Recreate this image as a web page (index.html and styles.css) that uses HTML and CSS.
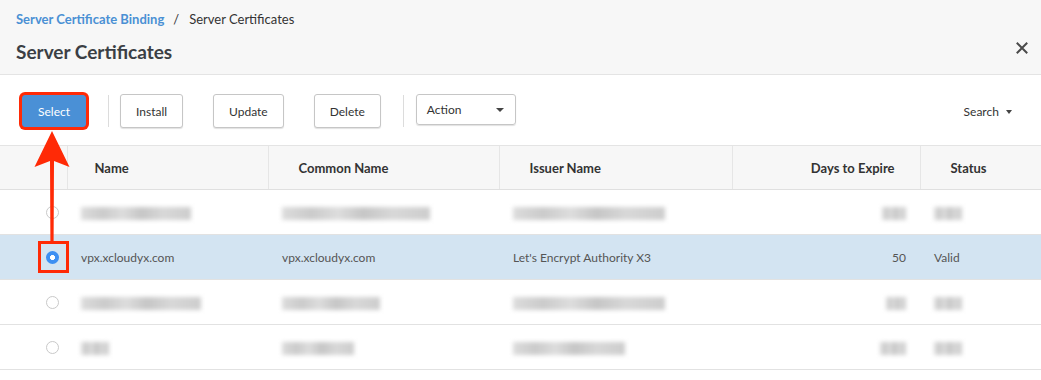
FILE: index.html
```html
<!doctype html>
<html lang="en">
  <head>
    <meta charset="UTF-8" />
    <title>Server Certificates</title>
    <link rel="stylesheet" href="styles.css">
  </head>
  <body>
    <div class="page">
      <div class="pageHead">
        <div class="breadcrumb">
          <a class="crumbLink" href="#">Server Certificate Binding</a>
          <span class="crumbSep">/</span>
          <span class="crumbCurrent">Server Certificates</span>
        </div>
        <div class="titleRow">
          <h1 class="title">Server Certificates</h1>
          <button class="closeBtn" aria-label="Close">
            <svg width="12" height="12" viewBox="0 0 12 12"><path d="M1.5 1.5 L10.5 10.5 M10.5 1.5 L1.5 10.5" stroke="#4a4a4a" stroke-width="2" stroke-linecap="square"/></svg>
          </button>
        </div>
      </div>

      <div class="toolbar">
        <button class="btn btnPrimary highlighted">Select</button>
        <span class="toolSep"></span>
        <button class="btn">Install</button>
        <button class="btn">Update</button>
        <button class="btn">Delete</button>
        <span class="toolSep"></span>
        <div class="selectBox">
          <span>Action</span>
          <span class="caret"></span>
        </div>
        <div class="search">Search <span class="caret small"></span></div>
      </div>

      <table class="certTable">
        <thead>
          <tr>
            <th class="colRadio"></th>
            <th class="colName">Name</th>
            <th class="colCommon">Common Name</th>
            <th class="colIssuer">Issuer Name</th>
            <th class="colDays num">Days to Expire</th>
            <th class="colStatus">Status</th>
          </tr>
        </thead>
        <tbody>
          <tr>
            <td class="radioCell"><span class="radio"></span></td>
            <td><span class="redacted" style="width:110px"></span></td>
            <td><span class="redacted" style="width:148px"></span></td>
            <td><span class="redacted" style="width:152px"></span></td>
            <td class="num"><span class="redacted" style="width:24px"></span></td>
            <td><span class="redacted" style="width:28px"></span></td>
          </tr>
          <tr class="selected">
            <td class="radioCell"><span class="radio checked"></span></td>
            <td>vpx.xcloudyx.com</td>
            <td>vpx.xcloudyx.com</td>
            <td>Let's Encrypt Authority X3</td>
            <td class="num">50</td>
            <td>Valid</td>
          </tr>
          <tr>
            <td class="radioCell"><span class="radio"></span></td>
            <td><span class="redacted" style="width:120px"></span></td>
            <td><span class="redacted" style="width:98px"></span></td>
            <td><span class="redacted" style="width:152px"></span></td>
            <td class="num"><span class="redacted" style="width:20px"></span></td>
            <td><span class="redacted" style="width:28px"></span></td>
          </tr>
          <tr>
            <td class="radioCell"><span class="radio"></span></td>
            <td><span class="redacted" style="width:28px"></span></td>
            <td><span class="redacted" style="width:72px"></span></td>
            <td><span class="redacted" style="width:112px"></span></td>
            <td class="num"><span class="redacted" style="width:26px"></span></td>
            <td><span class="redacted" style="width:28px"></span></td>
          </tr>
        </tbody>
      </table>

      <!-- annotation: arrow from Select to the selected radio -->
      <svg class="callout" width="44" height="116" viewBox="30 128 44 116">
        <path d="M52 131 L69.5 167 L54 161 L53.6 241 L50.4 241 L50 161 L34.5 167 Z" fill="#ff2a06"/>
      </svg>
      <div class="calloutBox"></div>
    </div>
  </body>
</html>
```

FILE: styles.css
```css
body {
  margin: 0;
  font-family: Lato, 'Liberation Sans', sans-serif;
  font-size: 12px;
  color: #333;
  background: #fff;
}

.page {
  position: relative;
  width: 1041px;
  height: 380px;
  overflow: hidden;
}

.pageHead {
  height: 75px;
  padding: 11px 13px 0 16px;
  box-sizing: border-box;
  background: #f7f7f7;
  border-bottom: 1px solid #e4e4e4;
}

.breadcrumb {
  font-size: 13px;
  line-height: 16px;
  display: flex;
  align-items: center;
}
.crumbLink {
  color: #4a90d4;
  font-weight: bold;
  text-decoration: none;
}
.crumbSep {
  margin: 0 10px 0 9px;
  color: #333;
}
.crumbCurrent {
  color: #333;
}

.titleRow {
  display: flex;
  justify-content: space-between;
  margin-top: 12px;
}
.title {
  margin: 0;
  font-size: 19px;
  line-height: 25px;
  font-weight: bold;
  color: #3b3f45;
}
.closeBtn {
  border: 0;
  background: none;
  padding: 0;
  width: 12px;
  height: 12px;
  margin-top: 3px;
  cursor: pointer;
}
.closeBtn svg {
  display: block;
}

.toolbar {
  height: 70px;
  display: flex;
  align-items: center;
  padding: 2px 29px 0 22px;
  box-sizing: border-box;
}

.btn {
  height: 34px;
  padding: 0 15px;
  font-family: inherit;
  font-size: 12px;
  color: #333;
  background: #fff;
  border: 1px solid #c6c6c6;
  border-radius: 3px;
  box-shadow: 0 1px 1px rgba(0, 0, 0, .12);
  margin-right: 30px;
  cursor: pointer;
}
.btn:nth-of-type(4) {
  margin-right: 22px;
}
.btnPrimary {
  background: #4a90d6;
  border-color: #4a90d6;
  color: #fff;
  width: 64px;
  height: 32px;
  padding: 0;
  margin-right: 22px;
}
.highlighted {
  box-shadow: 0 0 0 3px #ff2a06;
}

.toolSep {
  width: 1px;
  height: 32px;
  background: #dcdcdc;
  margin-right: 11px;
}

.selectBox {
  width: 100px;
  height: 31px;
  box-sizing: border-box;
  margin-left: 1px;
  margin-top: -3px;
  padding: 0 11px 0 10px;
  display: flex;
  align-items: center;
  justify-content: space-between;
  border: 1px solid #c6c6c6;
  border-radius: 3px;
  box-shadow: 0 1px 1px rgba(0, 0, 0, .12);
  font-size: 12px;
}

.caret {
  width: 0;
  height: 0;
  border-left: 4px solid transparent;
  border-right: 4px solid transparent;
  border-top: 4px solid #444;
}
.caret.small {
  display: inline-block;
  border-left-width: 3.5px;
  border-right-width: 3.5px;
  border-top-width: 4px;
  vertical-align: 2px;
  margin-left: 4px;
}

.search {
  margin-left: auto;
  color: #333;
}

.certTable {
  width: 1041px;
  border-collapse: collapse;
  table-layout: fixed;
}
.certTable th {
  box-sizing: border-box;
  height: 44px;
  padding: 0 0 0 30px;
  background: #f7f7f7;
  border-top: 1px solid #e4e4e4;
  border-bottom: 1px solid #e0e0e0;
  border-left: 1px solid #e6e6e6;
  text-align: left;
  font-size: 13px;
  font-weight: bold;
  color: #333;
}
.certTable th.colRadio {
  border-left: 0;
  width: 67px;
  padding: 0;
}
.certTable th.colName {
  padding-left: 27px;
}
.colName { width: 201px; }
.colCommon { width: 231px; }
.colIssuer { width: 233px; }
.colDays { width: 188px; }
.certTable th.num {
  text-align: right;
  padding: 0 25px 0 0;
}

.certTable td {
  height: 44px;
  padding: 0 0 0 14px;
  border-bottom: 1px solid #e2e2e2;
  color: #555;
  white-space: nowrap;
}
.certTable td.num {
  text-align: right;
  padding: 0 14px 0 0;
}
.certTable td.radioCell {
  padding: 0 0 0 46px;
}
.certTable tr.selected td {
  background: #d3e4f2;
}

.radio {
  display: block;
  width: 13px;
  height: 13px;
  box-sizing: border-box;
  border: 1px solid #c9c9c9;
  border-radius: 50%;
  background: #fff;
}
.radio.checked {
  border: 0;
  background: radial-gradient(circle, #fff 0 2.2px, #3d8ff2 2.8px);
}

.redacted {
  display: inline-block;
  height: 13px;
  vertical-align: middle;
  background: linear-gradient(90deg, #dcdcdc 0, #cbcbcb 20%, #dddddd 38%, #c6c6c6 55%, #d8d8d8 75%, #cdcdcd 100%);
  filter: blur(2px);
}

.callout {
  position: absolute;
  left: 30px;
  top: 128px;
  pointer-events: none;
}
.calloutBox {
  position: absolute;
  left: 38px;
  top: 241px;
  width: 31px;
  height: 32px;
  box-sizing: border-box;
  border: 3px solid #ff2a06;
  pointer-events: none;
}
```
